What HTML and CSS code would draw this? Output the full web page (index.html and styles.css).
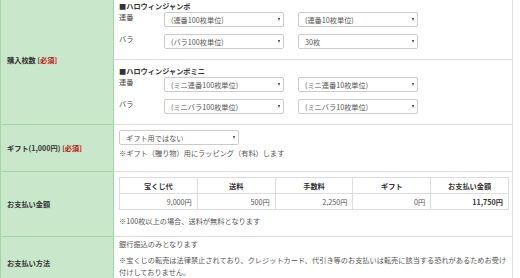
FILE: index.html
```html
<!DOCTYPE html>
<html lang="ja">
  <head>
    <meta charset="UTF-8" />
    <meta name="viewport" content="width=device-width, initial-scale=1.0" />
    <title>購入フォーム</title>
    <link rel="stylesheet" href="styles.css">
  </head>

  <body>
    <table class="form">
      <tr>
        <th rowspan="2">購入枚数 <span class="req">[必須]</span></th>
        <td class="block">
          <p class="ttl">■ハロウィンジャンボ</p>
          <div class="line">
            <span class="lbl">連番</span>
            <span class="sel"><select><option>(連番100枚単位)</option></select></span>
            <span class="sel"><select><option>(連番10枚単位)</option></select></span>
          </div>
          <div class="line">
            <span class="lbl">バラ</span>
            <span class="sel"><select><option>(バラ100枚単位)</option></select></span>
            <span class="sel"><select><option>30枚</option></select></span>
          </div>
        </td>
      </tr>
      <tr>
        <td class="block">
          <p class="ttl">■ハロウィンジャンボミニ</p>
          <div class="line">
            <span class="lbl">連番</span>
            <span class="sel"><select><option>(ミニ連番100枚単位)</option></select></span>
            <span class="sel"><select><option>(ミニ連番10枚単位)</option></select></span>
          </div>
          <div class="line">
            <span class="lbl">バラ</span>
            <span class="sel"><select><option>(ミニバラ100枚単位)</option></select></span>
            <span class="sel"><select><option>(ミニバラ10枚単位)</option></select></span>
          </div>
        </td>
      </tr>
      <tr>
        <th>ギフト(1,000円) <span class="req">[必須]</span></th>
        <td class="gift">
          <span class="sel"><select><option>ギフト用ではない</option></select></span>
          <p class="note">※ギフト（贈り物）用にラッピング（有料）します</p>
        </td>
      </tr>
      <tr>
        <th>お支払い金額</th>
        <td class="total">
          <table class="fee">
            <tr>
              <th>宝くじ代</th>
              <th>送料</th>
              <th>手数料</th>
              <th>ギフト</th>
              <th>お支払い金額</th>
            </tr>
            <tr>
              <td>9,000円</td>
              <td>500円</td>
              <td>2,250円</td>
              <td>0円</td>
              <td class="sum">11,750円</td>
            </tr>
          </table>
          <p class="note note_fee">※100枚以上の場合、送料が無料となります</p>
        </td>
      </tr>
      <tr>
        <th>お支払い方法</th>
        <td class="pay">
          <p>銀行振込のみとなります</p>
          <p class="note">※宝くじの転売は法律禁止されており、クレジットカード、代引き等のお支払いは転売に該当する恐れがあるためお受け付けしておりません。</p>
        </td>
      </tr>
    </table>
  </body>
</html>
```

FILE: styles.css
```css
* {
  margin: 0;
  padding: 0;
  box-sizing: border-box;
}

body {
  background-color: #fff;
  font-family: "Noto Sans CJK JP", "Noto Sans", sans-serif;
  font-size: 7.2px;
  line-height: 12px;
  color: #555;
}

.form {
  width: 513px;
  margin-top: -5px;
  border-collapse: collapse;
}

.form > tbody > tr > th {
  width: 113px;
  padding-left: 6px;
  background-color: #c9e7ca;
  border-left: 1px solid #a6d3a6;
  border-right: 1px solid #a6d3a6;
  border-bottom: 1px solid #a6d3a6;
  text-align: left;
  vertical-align: middle;
  color: #333;
  font-weight: bold;
}

.req {
  color: #c30d0d;
}

.form > tbody > tr > td {
  padding: 5px 3px 10px 5px;
  border-right: 1px solid #ddd;
  border-bottom: 1px solid #ddd;
  vertical-align: top;
}

.ttl {
  color: #333;
  font-weight: bold;
}

.line {
  display: flex;
  align-items: flex-start;
}

.line + .line {
  margin-top: 7px;
}

.lbl {
  width: 45px;
  line-height: 10px;
  color: #444;
}

.sel {
  position: relative;
  display: inline-block;
  width: 120px;
  margin-right: 14px;
}

.sel::after {
  content: "";
  position: absolute;
  right: 4px;
  top: 6px;
  border-left: 1.5px solid transparent;
  border-right: 1.5px solid transparent;
  border-top: 3px solid #333;
}

.sel select {
  appearance: none;
  -webkit-appearance: none;
  display: block;
  width: 100%;
  height: 15px;
  padding: 0 6px;
  border: 1px solid #ccc;
  border-radius: 2px;
  background-color: #fff;
  font-family: inherit;
  font-size: 7.2px;
  color: #555;
  outline: none;
}

.gift {
  padding-bottom: 12px !important;
}

.gift .note {
  margin-top: 2px;
}

.fee {
  width: 100%;
  border-collapse: collapse;
  table-layout: fixed;
}

.fee th,
.fee td {
  height: 16px;
  padding: 0 5px;
  border: 1px solid #ddd;
  line-height: 14px;
}

.fee th {
  font-weight: bold;
  color: #333;
  text-align: center;
}

.fee td {
  text-align: right;
}

.fee .sum {
  font-weight: bold;
  color: #333;
}

.note_fee {
  margin-top: 5px;
}

.total {
  padding-bottom: 9px !important;
}

.pay {
  padding-top: 1px !important;
}

.pay .note {
  margin-top: 4px;
}
```
